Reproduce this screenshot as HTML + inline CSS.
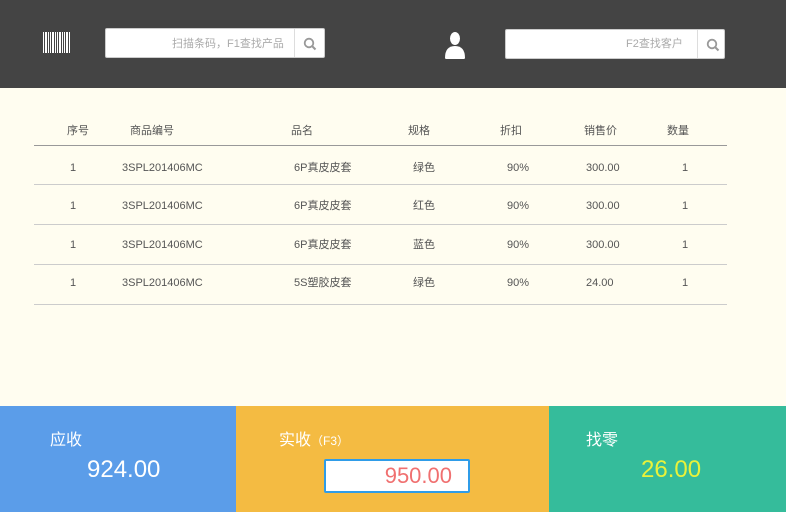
<!DOCTYPE html>
<html><head><meta charset="utf-8"><style>
*{margin:0;padding:0;box-sizing:border-box}
body{width:786px;height:512px;overflow:hidden;background:#fffdf0;font-family:"Liberation Sans","Noto Sans CJK SC",sans-serif;position:relative}
.hd{position:absolute;left:0;top:0;width:786px;height:88px;background:#444}
.sb{position:absolute;background:#fff;border:1px solid #ccc;border-radius:2px;height:30px}
.sb .ph{position:absolute;top:8px;font-size:11px;line-height:13px;color:#aaa}
.sb .dv{position:absolute;top:0;bottom:0;width:1px;background:#ddd}
.t{position:absolute;font-size:11px;line-height:14px;height:14px;color:#555;white-space:nowrap}
.ln{position:absolute;left:34px;width:693px;height:1px;background:#ccc}
.p{position:absolute;top:406px;height:106px}
</style></head><body>
<div class="hd">
<svg style="position:absolute;left:43px;top:32px" width="28" height="21"><g fill="#fff">
<rect x="0" y="0" width="1" height="21"/><rect x="2" y="0" width="2" height="21"/><rect x="5" y="0" width="1" height="21"/><rect x="7" y="0" width="1" height="21"/><rect x="9" y="0" width="2" height="21"/><rect x="12" y="0" width="1" height="21"/><rect x="14" y="0" width="1" height="21"/><rect x="16" y="0" width="2" height="21"/><rect x="19" y="0" width="1" height="21"/><rect x="21" y="0" width="1" height="21"/><rect x="23" y="0" width="2" height="21"/><rect x="26" y="0" width="1" height="21"/></g></svg>
<div class="sb" style="left:105px;top:28px;width:220px"><span class="ph" style="left:66px;top:9px">扫描条码，F1查找产品</span><div class="dv" style="left:188px"></div>
<svg style="position:absolute;left:197px;top:8px" width="14" height="14"><circle cx="6" cy="6" r="4.3" fill="none" stroke="#999" stroke-width="1.8"/><line x1="9" y1="9" x2="12.5" y2="12.5" stroke="#999" stroke-width="2"/></svg></div>
<svg style="position:absolute;left:445px;top:31px" width="20" height="28"><ellipse cx="10" cy="7.5" rx="5" ry="6.5" fill="#fff"/><path d="M0 27 Q0 15 10 15 Q20 15 20 27 Q20 28 18 28 L2 28 Q0 28 0 27 Z" fill="#fff"/></svg>
<div class="sb" style="left:505px;top:29px;width:220px"><span class="ph" style="left:120px">F2查找客户</span><div class="dv" style="left:191px"></div>
<svg style="position:absolute;left:200px;top:8px" width="14" height="14"><circle cx="6" cy="6" r="4.3" fill="none" stroke="#999" stroke-width="1.8"/><line x1="9" y1="9" x2="12.5" y2="12.5" stroke="#999" stroke-width="2"/></svg></div>
</div>
<div class="t" style="left:67px;top:124px">序号</div><div class="t" style="left:130px;top:124px">商品编号</div><div class="t" style="left:291px;top:124px">品名</div><div class="t" style="left:408px;top:124px">规格</div><div class="t" style="left:500px;top:124px">折扣</div><div class="t" style="left:584px;top:124px">销售价</div><div class="t" style="left:667px;top:124px">数量</div>
<div class="ln" style="top:145px;background:#999"></div>
<div class="ln" style="top:184px"></div><div class="ln" style="top:224px"></div><div class="ln" style="top:264px"></div><div class="ln" style="top:304px"></div>
<div class="t" style="left:70px;top:161px">1</div><div class="t" style="left:122px;top:161px">3SPL201406MC</div><div class="t" style="left:294px;top:161px">6P真皮皮套</div><div class="t" style="left:413px;top:161px">绿色</div><div class="t" style="left:507px;top:161px">90%</div><div class="t" style="left:586px;top:161px">300.00</div><div class="t" style="left:682px;top:161px">1</div>
<div class="t" style="left:70px;top:199px">1</div><div class="t" style="left:122px;top:199px">3SPL201406MC</div><div class="t" style="left:294px;top:199px">6P真皮皮套</div><div class="t" style="left:413px;top:199px">红色</div><div class="t" style="left:507px;top:199px">90%</div><div class="t" style="left:586px;top:199px">300.00</div><div class="t" style="left:682px;top:199px">1</div>
<div class="t" style="left:70px;top:238px">1</div><div class="t" style="left:122px;top:238px">3SPL201406MC</div><div class="t" style="left:294px;top:238px">6P真皮皮套</div><div class="t" style="left:413px;top:238px">蓝色</div><div class="t" style="left:507px;top:238px">90%</div><div class="t" style="left:586px;top:238px">300.00</div><div class="t" style="left:682px;top:238px">1</div>
<div class="t" style="left:70px;top:276px">1</div><div class="t" style="left:122px;top:276px">3SPL201406MC</div><div class="t" style="left:294px;top:276px">5S塑胶皮套</div><div class="t" style="left:413px;top:276px">绿色</div><div class="t" style="left:507px;top:276px">90%</div><div class="t" style="left:586px;top:276px">24.00</div><div class="t" style="left:682px;top:276px">1</div>
<div class="p" style="left:0;width:236px;background:#5b9de9">
<div style="position:absolute;left:50px;top:25px;color:#fff;font-size:16px;line-height:20px">应收</div>
<div style="position:absolute;left:87px;top:50px;color:#fff;font-size:24px">924.00</div></div>
<div class="p" style="left:236px;width:313px;background:#f4bb42">
<div style="position:absolute;left:43px;top:25px;color:#fff;font-size:16px;line-height:20px">实收<span style="font-size:12px">（F3）</span></div>
<div style="position:absolute;left:88px;top:53px;width:146px;height:34px;background:#fff;border:2px solid #2f9ce8;border-radius:2px;color:#f07070;font-size:22px;text-align:right;padding-right:16px;line-height:30px">950.00</div></div>
<div class="p" style="left:549px;width:237px;background:#35bc9b">
<div style="position:absolute;left:37px;top:25px;color:#fff;font-size:16px;line-height:20px">找零</div>
<div style="position:absolute;left:92px;top:50px;color:#e9f23a;font-size:24px">26.00</div></div>
</body></html>
